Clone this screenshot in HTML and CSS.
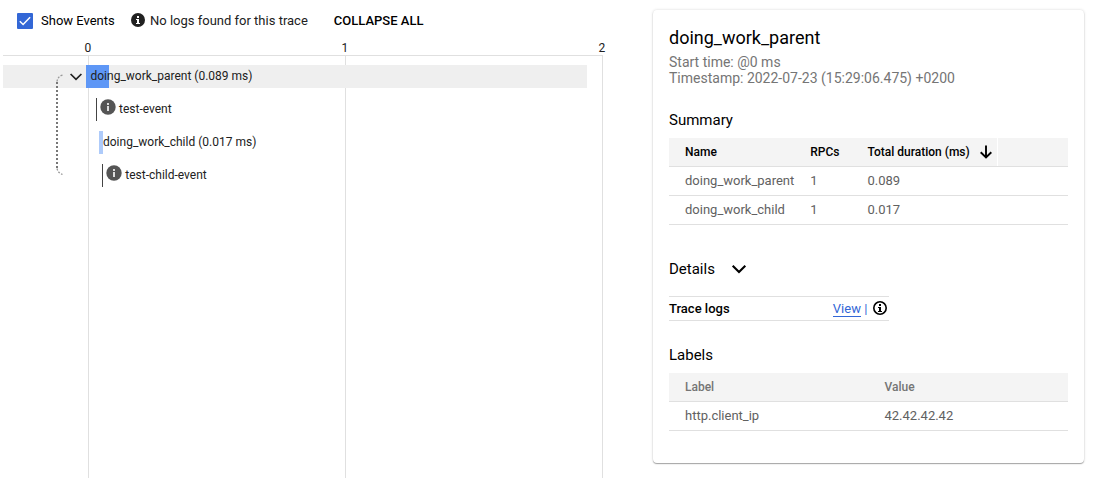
FILE: index.html
```html
<!DOCTYPE html>
<html lang="en">
<head>
<meta charset="utf-8">
<title>Trace details</title>
<link rel="stylesheet" href="styles.css">
</head>
<body>
<main class="page">
  <section class="trace">
    <div class="toolbar">
      <label class="show-events">
        <svg class="checkbox" width="16" height="16" viewBox="0 0 16 16"><rect width="16" height="16" rx="1" fill="#3367d6"/><path d="M2.8 8.3l3.3 3.2 7-7.2" fill="none" stroke="#fff" stroke-width="1.5"/></svg>
        <span>Show Events</span>
      </label>
      <div class="no-logs">
        <svg width="14" height="14" viewBox="0 0 14 14"><circle cx="7" cy="7" r="7" fill="#212121"/><path d="M6 3h2v2H6zM5 6h3v4h1v1H5v-1h1V7H5z" fill="#fff"/></svg>
        <span>No logs found for this trace</span>
      </div>
      <button class="collapse">COLLAPSE ALL</button>
    </div>
    <div class="axis"><span>0</span><span>1</span><span>2</span></div>
    <div class="chart">
      <div class="row row-selected">
        <svg class="toggle" width="14" height="10" viewBox="0 0 14 10"><path d="M1.6 2l5.4 5.4L12.4 2" fill="none" stroke="#212121" stroke-width="1.7"/></svg>
        <div class="span span-parent">doing_work_parent (0.089 ms)</div>
      </div>
      <div class="row">
        <div class="event event-parent">
          <svg width="16" height="16" viewBox="0 0 16 16"><circle cx="8" cy="8" r="7.7" fill="#555"/><path d="M7 4h2v2H7zM7 7h2v5H7z" fill="#ddd"/></svg>
          <span>test-event</span>
        </div>
      </div>
      <div class="row">
        <div class="span span-child">doing_work_child (0.017 ms)</div>
      </div>
      <div class="row">
        <div class="event event-child">
          <svg width="16" height="16" viewBox="0 0 16 16"><circle cx="8" cy="8" r="7.7" fill="#555"/><path d="M7 4h2v2H7zM7 7h2v5H7z" fill="#ddd"/></svg>
          <span>test-child-event</span>
        </div>
      </div>
      <svg class="link" width="12" height="102" viewBox="0 0 12 102"><path d="M7.5 1.2Q3 2.2 2 7.5M2 94.500q1 4.500 5.500 6" fill="none" stroke="#999" stroke-width="1.300" stroke-dasharray="2 1.500"/><path d="M2 8v87" stroke="#777" stroke-width="2" stroke-dasharray="2 2"/></svg>
    </div>
  </section>

  <section class="card">
    <h1 class="title">doing_work_parent</h1>
    <p class="meta">Start time: @0 ms<br>Timestamp: 2022-07-23 (15:29:06.475) +0200</p>

    <h2 class="heading heading-summary">Summary</h2>
    <div class="table summary">
      <div class="thead"><span>Name</span><span>RPCs</span><span class="sorted">Total duration (ms)
        <svg width="12" height="14" viewBox="0 0 12 14"><path d="M6 .5v11.800M.7 7.300L6 12.500l5.300-5.200" fill="none" stroke="#000" stroke-width="1.900"/></svg></span><span></span></div>
      <div class="tr"><span>doing_work_parent</span><span>1</span><span>0.089</span></div>
      <div class="tr"><span>doing_work_child</span><span>1</span><span>0.017</span></div>
    </div>

    <h2 class="heading heading-details">Details
      <svg width="16" height="10" viewBox="0 0 16 10"><path d="M1.700 1.700L8 8l6.300-6.300" fill="none" stroke="#000" stroke-width="2.100"/></svg>
    </h2>
    <div class="logs">
      <span class="logs-name">Trace logs</span>
      <a class="view">View</a><span class="bar">|</span>
      <svg class="info" width="14" height="14" viewBox="0 0 14 14"><circle cx="7" cy="7" r="6.200" fill="none" stroke="#000" stroke-width="1.600"/><path d="M6 3h2v2H6zM5 6h3v4h1v1H5v-1h1V7H5z" fill="#000"/></svg>
    </div>

    <h2 class="heading heading-labels">Labels</h2>
    <div class="table labels">
      <div class="thead"><span>Label</span><span>Value</span></div>
      <div class="tr"><span>http.client_ip</span><span>42.42.42.42</span></div>
    </div>
  </section>
</main>
</body>
</html>
```
FILE: styles.css
```css
* { box-sizing: border-box; }
body { margin: 0; background: #fff; font-family: Roboto, sans-serif; font-size: 13px; color: #212121; }
svg { display: block; flex: none; }
h1, h2, p { margin: 0; font-weight: 400; }
.page { display: flex; height: 478px; overflow: hidden; }

.trace { width: 653px; display: flex; flex-direction: column; }
.toolbar { display: flex; align-items: center; height: 41px; padding-left: 17px; }
.show-events { display: flex; align-items: center; gap: 8px; width: 114px; color: #000; }
.checkbox { margin-top: 1px; }
.no-logs { display: flex; align-items: center; gap: 5px; width: 202.8px; }
.no-logs svg { margin-top: -1px; }
.collapse { border: 0; background: none; padding: 0; font: 500 13px Roboto, sans-serif; color: #000; }
.axis { display: flex; width: 600px; height: 15px; margin-left: 3px; padding-left: 60px; border-bottom: 1px solid #e0e0e0; font-size: 12px; line-height: 14px; }
.axis span { flex: none; width: 257px; padding-left: 21.6px; }
.axis span:last-child { width: 40px; }

.chart { position: relative; flex: 1; width: 600px; margin-left: 3px; padding-top: 9px; display: flex; flex-direction: column; gap: 10px; font-size: 12px;
  background: linear-gradient(#e0e0e0, #e0e0e0) 85px 0 / 1px 100% no-repeat, linear-gradient(#e0e0e0, #e0e0e0) 342px 0 / 1px 100% no-repeat, linear-gradient(#e0e0e0, #e0e0e0) 599px 0 / 1px 100% no-repeat; }
.row { display: flex; align-items: center; height: 23px; width: 584px; flex: none; }
.row-selected { background: #efefef; }
.toggle { margin-left: 66px; }
.span { height: 23px; line-height: 22px; white-space: nowrap; }
.span-parent { margin-left: 3px; padding-left: 4.5px; background: linear-gradient(#5e97f6, #5e97f6) 0 0 / 23px 100% no-repeat; }
.span-child { margin-left: 96px; padding-left: 4px; background: linear-gradient(#aecbfa, #aecbfa) 0 0 / 4px 100% no-repeat; }
.event { display: flex; height: 23px; border-left: 1px solid #444; padding-left: 3px; gap: 3px; line-height: 22px; }
.event svg { margin-top: 1px; }
.event-parent { margin-left: 93px; }
.event-child { margin-left: 99px; }
.event-child span { padding-left: .3px; }
.link { position: absolute; left: 52px; top: 18px; }

.card { width: 431px; height: 453px; margin-top: 10px; padding: 15px 16px; border-radius: 4px; box-shadow: 0 1px 1px rgba(0,0,0,.32), 0 0 3px rgba(0,0,0,.16); color: #000; }
.title { font-size: 18px; line-height: 26px; }
.meta { font-size: 14px; line-height: 16px; margin-top: 3px; color: #757575; }
.heading { font-size: 15px; line-height: 20px; }
.heading-summary { margin-top: 24px; }
.table { margin-top: 8px; color: #616161; }
.thead, .tr { display: grid; height: 29px; line-height: 28px; padding-left: 16px; border-bottom: 1px solid #e0e0e0; }
.summary .thead, .summary .tr { grid-template-columns: 125.3px 57.2px 130.5px 1fr; }
.labels .thead, .labels .tr { grid-template-columns: 199.5px 1fr; }
.thead { background: #f4f4f4; font-size: 12px; font-weight: 500; color: #757575; }
.summary .thead { color: #000; }
.sorted { display: flex; align-items: center; gap: 10.4px; border-right: 1px solid #fff; white-space: nowrap; }
.heading-details { display: flex; align-items: center; gap: 16px; margin-top: 34px; }
.logs { display: flex; align-items: center; width: 220px; height: 25px; margin-top: 17px; padding-right: 2px; border: solid #e0e0e0; border-width: 1px 0; }
.logs-name { flex: 1; font-weight: 500; }
.view { color: #3367d6; height: 16px; line-height: 15px; border-bottom: 1px solid #3367d6; }
.bar { margin: 0 5.5px 0 3.4px; color: #3367d6; }
.info { margin-top: -1px; }
.heading-labels { margin-top: 24px; }
```
